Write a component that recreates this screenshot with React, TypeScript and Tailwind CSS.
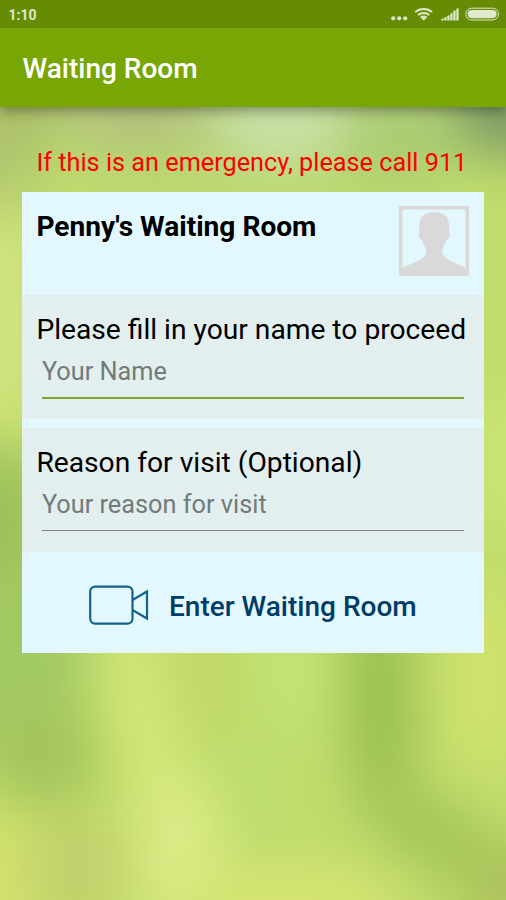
import { useState } from 'react'

interface FieldProps {
  label: string
  placeholder: string
  value: string
  active?: boolean
  onChange: (value: string) => void
}

interface Blob {
  cx: number
  cy: number
  rx: number
  ry: number
  rotate?: number
  fill: string
}

const BLOBS: Blob[] = [
  { cx: 250, cy: 90, rx: 280, ry: 65, fill: '#b9d080' },
  { cx: 0, cy: 110, rx: 60, ry: 55, fill: '#abc069' },
  { cx: 135, cy: 120, rx: 70, ry: 32, fill: '#b2c17d' },
  { cx: 285, cy: 120, rx: 70, ry: 48, fill: '#c8e0a5' },
  { cx: 400, cy: 145, rx: 60, ry: 45, fill: '#a8cd72' },
  { cx: 515, cy: 110, rx: 60, ry: 50, fill: '#7f9d66' },
  { cx: 250, cy: 182, rx: 200, ry: 14, fill: '#b8d470' },
  { cx: -5, cy: 180, rx: 45, ry: 35, fill: '#b3c871' },
  { cx: -5, cy: 320, rx: 60, ry: 115, fill: '#cfe37c' },
  { cx: -5, cy: 530, rx: 60, ry: 85, fill: '#9dc15a' },
  { cx: 15, cy: 660, rx: 75, ry: 95, fill: '#a3c963' },
  { cx: 40, cy: 755, rx: 60, ry: 50, fill: '#a4c55c' },
  { cx: 145, cy: 730, rx: 32, ry: 130, rotate: -13, fill: '#d3e876' },
  { cx: 178, cy: 850, rx: 46, ry: 80, fill: '#daeb85' },
  { cx: 208, cy: 680, rx: 30, ry: 60, rotate: -15, fill: '#c1d865' },
  { cx: 250, cy: 790, rx: 30, ry: 75, rotate: -15, fill: '#bedc6f' },
  { cx: 292, cy: 670, rx: 34, ry: 70, fill: '#c2e477' },
  { cx: 380, cy: 700, rx: 34, ry: 125, rotate: -2, fill: '#9abf52' },
  { cx: 435, cy: 835, rx: 95, ry: 36, rotate: 32, fill: '#a6c65a' },
  { cx: 485, cy: 680, rx: 44, ry: 105, fill: '#cee26c' },
  { cx: 290, cy: 905, rx: 110, ry: 42, fill: '#d6e472' },
  { cx: -5, cy: 880, rx: 45, ry: 75, fill: '#d4e26c' },
  { cx: 75, cy: 870, rx: 50, ry: 60, fill: '#c2d16c' },
  { cx: 510, cy: 890, rx: 50, ry: 50, fill: '#acc35b' },
  { cx: 510, cy: 460, rx: 35, ry: 75, fill: '#cce675' },
]

function Backdrop() {
  return (
    <svg className="absolute inset-0 h-full w-full" viewBox="0 0 506 900" preserveAspectRatio="none">
      <defs>
        <filter id="soften" filterUnits="userSpaceOnUse" x="-100" y="-100" width="706" height="1100" colorInterpolationFilters="sRGB">
          <feGaussianBlur stdDeviation="25" />
        </filter>
      </defs>
      <g filter="url(#soften)">
        <rect x="-100" y="-100" width="706" height="1100" fill="#c0dc6c" />
        {BLOBS.map((b, i) => (
          <ellipse
            key={i}
            cx={b.cx}
            cy={b.cy}
            rx={b.rx}
            ry={b.ry}
            fill={b.fill}
            transform={`rotate(${b.rotate ?? 0} ${b.cx} ${b.cy})`}
          />
        ))}
      </g>
    </svg>
  )
}

function StatusBar() {
  return (
    <div className="flex h-7 items-center justify-between bg-[#668b04] pl-[8.5px] pr-[7px] text-[#e0e8cd]">
      <span className="pt-px text-[14px] font-bold leading-none">1:10</span>
      <svg width="109" height="20" viewBox="0 0 109 20" fill="currentColor">
        <circle cx="3.2" cy="14.3" r="2.1" />
        <circle cx="9.2" cy="14.3" r="2.1" />
        <circle cx="15.2" cy="14.3" r="2.1" />
        <g fill="none" stroke="currentColor" strokeWidth="1.9">
          <path d="M25.2 8.1a13 13 0 0 1 17 0" />
          <path d="M28 11.1a9 9 0 0 1 11.4 0" />
          <path d="M30.7 13.7a5 5 0 0 1 6 0" />
        </g>
        <circle cx="33.7" cy="14.6" r="1.7" />
        <path d="M51.3 15l2.3-.8v2.2h-2.3zM54.3 13.5l2.3-.8v3.7h-2.3zM57.3 12l2.3-1v5.4h-2.3zM60.3 9.8l2.3-1v7.6h-2.3zM63.3 7.3l2.3-1v10.1h-2.3zM66.3 5.1l2.3-1v12.3h-2.3z" />
        <rect x="75.8" y="4.2" width="32.6" height="11.8" rx="5.9" fill="none" stroke="currentColor" />
        <rect x="77.6" y="6" width="29" height="8.2" rx="4.1" />
      </svg>
    </div>
  )
}

function Avatar() {
  return (
    <svg className="shrink-0" width="70" height="70" viewBox="0 0 70 70">
      <rect x="1.75" y="1.75" width="66.5" height="66.5" fill="none" stroke="#d9d9d9" strokeWidth="3.5" />
      <path
        fill="#d9d9d9"
        d="M2 63C12 56 27 55 27.2 45.500C27.200 41 24.500 39 23 34C20.500 33.500 18.500 28 20.600 26C19 12 24 6 35.200 6C46.500 6 51.500 12 49.800 26C51.900 28 50 33.500 47.400 34C46 39 43 41 43 45.500C44 55 58 56 68 63V70H2Z"
      />
    </svg>
  )
}

function VideoIcon() {
  return (
    <svg width="60" height="40" viewBox="0 0 60 40" fill="none" stroke="#14648a" strokeWidth="2.2">
      <rect x="1.2" y="1.6" width="42.3" height="37" rx="5" />
      <path d="M43.5 15L58 6.5V33.5L43.5 25" />
    </svg>
  )
}

function Field({ label, placeholder, value, active, onChange }: FieldProps) {
  return (
    <label className="block h-[124px] bg-[#e2efee] px-[14px] pt-[17.5px]">
      <span className="block whitespace-nowrap text-[28.2px] leading-[33px] text-black">{label}</span>
      <span className="block pl-[5.5px] pr-[6px]">
        <input
          value={value}
          placeholder={placeholder}
          onChange={e => onChange(e.target.value)}
          className={`block w-full bg-transparent pb-[11px] pt-[10.5px] text-[25.3px] leading-[30px] text-black outline-none placeholder:text-[#727b7a] ${
            active ? 'h-[53.5px] border-b-2 border-[#7fa82a]' : 'h-[52.5px] border-b border-[#7c8484]'
          }`}
        />
      </span>
    </label>
  )
}

export default function App() {
  const [name, setName] = useState('')
  const [reason, setReason] = useState('')

  return (
    <div className="relative h-[900px] w-full overflow-hidden font-[Roboto,sans-serif]">
      <Backdrop />
      <div className="relative flex h-full flex-col">
        <header className="shadow-[0_4px_12px_rgba(0,0,0,0.36)]">
          <StatusBar />
          <div className="flex h-[79px] items-center bg-[#78a605] pl-[22.5px] pt-0.5">
            <h1 className="text-[28px] font-medium leading-[33px] text-white">Waiting Room</h1>
          </div>
        </header>

        <main className="px-[22.4px] pt-[41px]">
          <p className="h-11 whitespace-nowrap pl-[14px] text-[25.25px] leading-[30px] text-[#ff0000]">
            If this is an emergency, please call 911
          </p>
          <section className="bg-[#e3f7ff]">
            <div className="flex h-[103px] items-start justify-between pl-[14px] pr-[14.5px] pt-[14px]">
              <h2 className="pt-1 text-[28.1px] font-bold leading-[33px] text-black">Penny's Waiting Room</h2>
              <Avatar />
            </div>
            <div className="flex flex-col gap-[9.4px]">
              <Field label="Please fill in your name to proceed" placeholder="Your Name" value={name} active onChange={setName} />
              <Field label="Reason for visit (Optional)" placeholder="Your reason for visit" value={reason} onChange={setReason} />
            </div>
            <button className="flex h-[100.6px] w-full items-center gap-5 pl-[66.600px] pt-1 text-[#003d66]">
              <VideoIcon />
              <span className="pt-[3px] text-[28px] font-medium leading-[33px]">Enter Waiting Room</span>
            </button>
          </section>
        </main>
      </div>
    </div>
  )
}
